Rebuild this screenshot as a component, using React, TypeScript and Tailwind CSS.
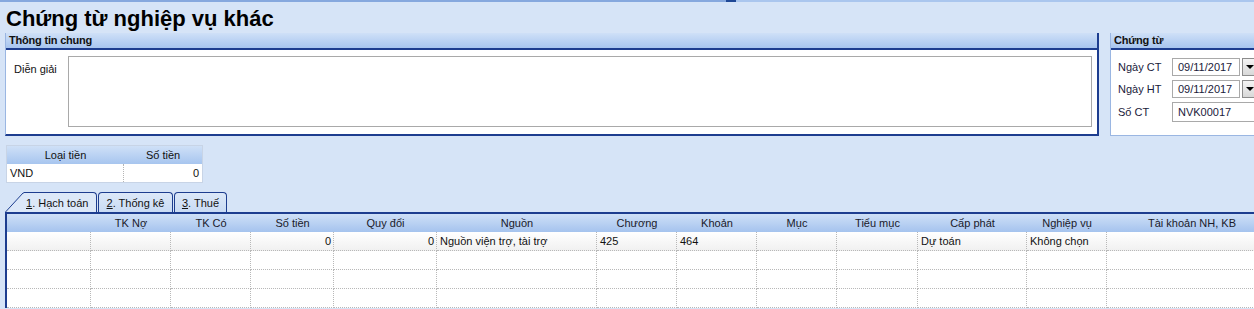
import React from 'react'

const cols = [
  { w: 'w-[84px]', title: '' },
  { w: 'w-[80px]', title: 'TK Nợ' },
  { w: 'w-[80px]', title: 'TK Có' },
  { w: 'w-[83px]', title: 'Số tiền' },
  { w: 'w-[103px]', title: 'Quy đổi' },
  { w: 'w-[160px]', title: 'Nguồn' },
  { w: 'w-[80px]', title: 'Chương' },
  { w: 'w-[80px]', title: 'Khoản' },
  { w: 'w-[80px]', title: 'Mục' },
  { w: 'w-[81px]', title: 'Tiểu mục' },
  { w: 'w-[109px]', title: 'Cấp phát' },
  { w: 'w-[80px]', title: 'Nghiệp vụ' },
  { w: 'w-[170px]', title: 'Tài khoản NH, KB' },
]

const firstRow: { text: string; right?: boolean }[] = [
  { text: '' },
  { text: '' },
  { text: '' },
  { text: '0', right: true },
  { text: '0', right: true },
  { text: 'Nguồn viện trợ, tài trợ' },
  { text: '425' },
  { text: '464' },
  { text: '' },
  { text: '' },
  { text: 'Dự toán' },
  { text: 'Không chọn' },
  { text: '' },
]

const DropBtn = () => (
  <div className='w-[16px] h-[18px] ml-[2px] border border-[#8c8c8c] bg-gradient-to-b from-[#f4f4f4] to-[#d8d8d8] flex items-center justify-center shrink-0'>
    <svg width='8' height='4' viewBox='0 0 8 4'>
      <path d='M0 0 L8 0 L4 4 Z' fill='#000' />
    </svg>
  </div>
)

const App = () => {
  return (
    <div className="w-[1254px] h-[309px] overflow-hidden bg-[#d6e4f7] text-[11px] text-[#111] font-['Liberation_Sans',Arial,sans-serif]">
      <div className='h-[2px] flex'>
        <div className='w-[726px] bg-[#86a8de]' />
        <div className='w-[10px] bg-[#1f4896]' />
        <div className='flex-1 bg-[#aac6ee]' />
      </div>

      <div className='h-[31px] pl-[6px] pt-[2px] flex items-center text-[22px] font-bold text-black leading-none'>
        Chứng từ nghiệp vụ khác
      </div>

      <div className='flex'>
        {/* Thong tin chung */}
        <div className='ml-[5px] w-[1094px] shrink-0 h-[103px] flex flex-col bg-white border-l border-l-[#9ab6e2] border-r-2 border-r-[#1d3d8f] border-b-2 border-b-[#1d3d8f]'>
          <div className='h-[17px] shrink-0 bg-gradient-to-b from-[#cfe0f7] to-[#a7c5ef] border-b-2 border-[#1d3d8f] pl-[3px] flex items-center font-bold text-[11px] tracking-[-0.2px]'>
            Thông tin chung
          </div>
          <div className='flex pt-[6px] pl-[8px]'>
            <div className='w-[54px] pt-[5px]'>Diễn giải</div>
            <div className='w-[1024px] h-[71px] border border-[#a9a9a9] bg-white' />
          </div>
        </div>

        {/* Chung tu */}
        <div className='ml-[11px] w-[160px] shrink-0 h-[103px] flex flex-col bg-white border-l border-[#9ab6e2] border-b border-b-[#9ab6e2]'>
          <div className='h-[17px] shrink-0 bg-gradient-to-b from-[#cfe0f7] to-[#a7c5ef] border-b-2 border-[#1d3d8f] pl-[3px] flex items-center font-bold text-[11px] tracking-[-0.2px]'>
            Chứng từ
          </div>
          <div className='flex flex-col gap-[4px] pt-[8px] pl-[7px] text-[#1a1a3a]'>
            <div className='flex items-center h-[18px]'>
              <div className='w-[54px]'>Ngày CT</div>
              <div className='w-[68px] h-[18px] border border-[#a9a9a9] flex items-center pl-[5px]'>09/11/2017</div>
              <DropBtn />
            </div>
            <div className='flex items-center h-[18px]'>
              <div className='w-[54px]'>Ngày HT</div>
              <div className='w-[68px] h-[18px] border border-[#a9a9a9] flex items-center pl-[5px]'>09/11/2017</div>
              <DropBtn />
            </div>
            <div className='flex items-center h-[20px]'>
              <div className='w-[54px]'>Số CT</div>
              <div className='w-[90px] h-[20px] border border-[#a9a9a9] flex items-center pl-[5px]'>NVK00017</div>
            </div>
          </div>
        </div>
      </div>

      {/* Loai tien */}
      <div className='ml-[6px] mt-[9px] w-[197px] border border-[#c8d4e6] bg-white'>
        <div className='flex h-[18px] bg-gradient-to-b from-[#cfe0f7] to-[#a7c5ef]'>
          <div className='w-[117px] flex items-center justify-center'>Loại tiền</div>
          <div className='flex-1 flex items-center justify-center'>Số tiền</div>
        </div>
        <div className='flex h-[18px]'>
          <div className='w-[117px] flex items-center pl-[3px] border-r border-dotted border-[#b5b5b5]'>VND</div>
          <div className='flex-1 flex items-center justify-end pr-[3px]'>0</div>
        </div>
      </div>

      {/* Tabs */}
      <div className='mt-[9px] ml-[5px] flex items-end h-[20px]'>
        <svg width='20' height='20' viewBox='0 0 20 20' className='shrink-0'>
          <path d='M0 20 L18 1 L20 1 L20 20 Z' fill='#dce8f8' />
          <path d='M0.5 20 L18 1 L20 0.5' fill='none' stroke='#1d3d8f' strokeWidth='1' />
        </svg>
        <div className='h-[20px] w-[73px] -ml-px bg-[#dce8f8] border-t border-r border-[#1d3d8f] rounded-tr-[4px] flex items-center pl-[2px] pt-[1px]'>
          <span><span className='underline'>1</span>. Hạch toán</span>
        </div>
        <div className='ml-px h-[20px] w-[75px] bg-gradient-to-b from-[#dce8f8] to-[#c9dbf4] border-t border-r border-l border-[#1d3d8f] rounded-t-[4px] flex items-center justify-center pt-[1px]'>
          <span><span className='underline'>2</span>. Thống kê</span>
        </div>
        <div className='ml-px h-[20px] w-[53px] bg-gradient-to-b from-[#dce8f8] to-[#c9dbf4] border-t border-r border-l border-[#1d3d8f] rounded-t-[4px] flex items-center justify-center pt-[1px]'>
          <span><span className='underline'>3</span>. Thuế</span>
        </div>
      </div>

      {/* Grid */}
      <div className='ml-[5px] border-t-2 border-l-2 border-[#1d3d8f] bg-white'>
        <div className='flex h-[18px] bg-gradient-to-b from-[#cfe0f7] to-[#a5c3ee]'>
          {cols.map((c, i) => (
            <div key={i} className={`${c.w} shrink-0 flex items-center justify-center text-[#1a1a2a]`}>{c.title}</div>
          ))}
        </div>
        <div className='flex h-[19px] bg-gradient-to-b from-white to-[#f0f0f0]'>
          {cols.map((c, i) => (
            <div key={i} className={`${c.w} shrink-0 flex items-center border-r border-b border-dotted border-[#b8b8b8] ${firstRow[i].right ? 'justify-end pr-[2px]' : 'pl-[3px]'}`}>
              {firstRow[i].text}
            </div>
          ))}
        </div>
        {[0, 1, 2].map(r => (
          <div key={r} className='flex h-[19px]'>
            {cols.map((c, i) => (
              <div key={i} className={`${c.w} shrink-0 border-r border-b border-dotted border-[#b8b8b8]`} />
            ))}
          </div>
        ))}
      </div>
    </div>
  )
}

export default App
